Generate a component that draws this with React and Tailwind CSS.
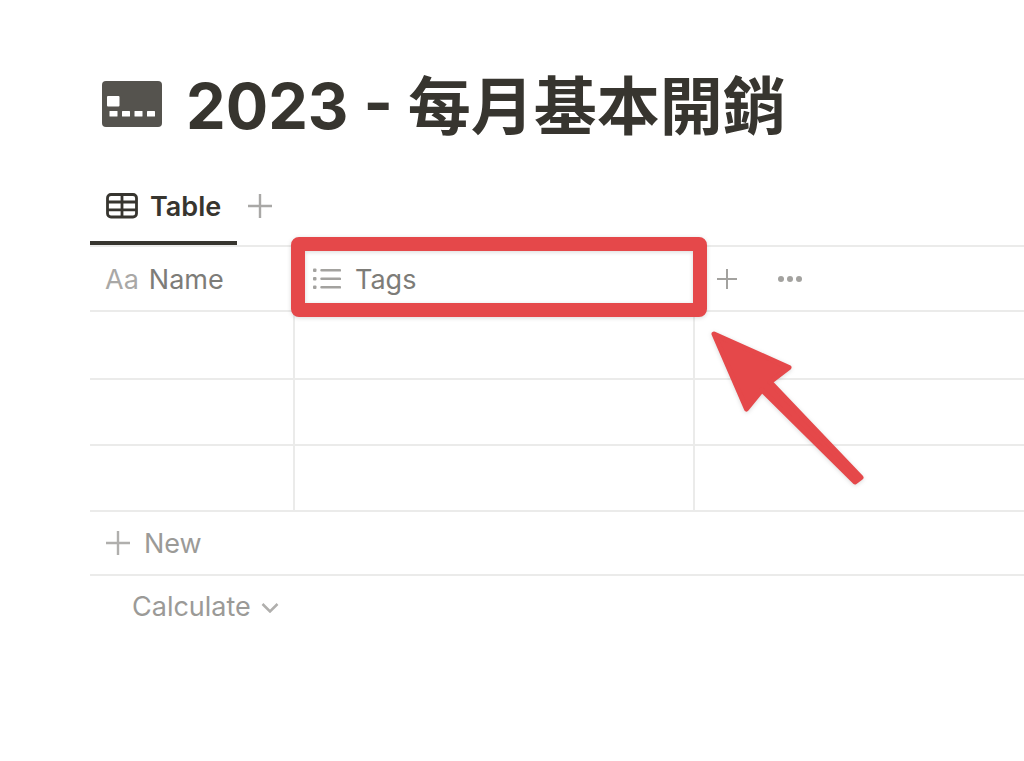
const rows = [1, 2, 3];

const Plus = ({ className }) => (
  <svg viewBox="0 0 24 24" fill="none" stroke="currentColor" strokeWidth="2.4" className={className} aria-hidden="true">
    <path d="M12 0v24M0 12h24" />
  </svg>
);

const CardIcon = () => (
  <svg viewBox="0 0 60 46" className="w-[60px] h-[46px] shrink-0" aria-hidden="true">
    <rect width="60" height="46" rx="4" fill="#55534e" />
    <g fill="#fff">
      <rect x="5" y="15" width="12.5" height="10.5" rx="1" />
      <rect x="7.5" y="30" width="8" height="5.5" rx="0.5" />
      <rect x="20" y="30" width="8" height="5.5" rx="0.5" />
      <rect x="32.5" y="30" width="8" height="5.5" rx="0.5" />
      <rect x="45" y="30" width="8" height="5.5" rx="0.5" />
    </g>
  </svg>
);

const TableIcon = () => (
  <svg viewBox="0 0 32 26" fill="none" stroke="currentColor" strokeWidth="2.8" className="w-8 h-[26px]" aria-hidden="true">
    <rect x="1.5" y="1.5" width="29" height="22.5" rx="3.5" />
    <path d="M1.5 9h29M1.5 16.8h29M16 1.5V24" />
  </svg>
);

const ListIcon = () => (
  <svg viewBox="0 0 28 22" className="w-7 h-[22px] text-[#a3a29f]" aria-hidden="true">
    <g fill="currentColor">
      <rect x="0" y="0.5" width="3.5" height="3.5" rx="1" />
      <rect x="0" y="9" width="3.5" height="3.5" rx="1" />
      <rect x="0" y="17.5" width="3.5" height="3.5" rx="1" />
    </g>
    <path d="M8.5 2.3h18.5M8.5 10.8h18.5M8.5 19.3h18.5" stroke="currentColor" strokeWidth="2.5" strokeLinecap="round" />
  </svg>
);

const Arrow = () => (
  <svg
    viewBox="0 0 156 156"
    className="absolute left-[413px] top-[83px] w-[156px] h-[156px] drop-shadow-sm pointer-events-none"
    fill="#e5484a"
    stroke="#e5484a"
    strokeWidth="5"
    strokeLinejoin="round"
    aria-hidden="true"
  >
    <path d="M6 4L81 37.500L62 52L153 147.5L147 152L54 60L38.5 79Z" />
  </svg>
);

const App = () => {
  return (
    <main className="min-h-screen overflow-hidden bg-white pl-[90px] pt-[60px] font-['Inter','Noto_Sans_CJK_TC',sans-serif] text-[#37352f]">
      <header className="flex items-center gap-6 pl-3 h-[88px]">
        <CardIcon />
        <h1 className="pt-1 text-[63px] leading-[88px] font-bold whitespace-nowrap">2023 - 每月基本開銷</h1>
      </header>

      <nav className="mt-[22px] flex h-[77px] border-b-2 border-[#ebebea]">
        <button type="button" className="flex items-center gap-3 px-4 h-[75px] border-b-4 border-[#37352f] text-[27px] font-semibold">
          <TableIcon />
          <span className="pt-1">Table</span>
        </button>
        <button type="button" aria-label="Add view" className="flex items-center h-[75px] pb-1 pl-[11px] text-[#a9a8a6]">
          <Plus className="w-6 h-6" />
        </button>
      </nav>

      <table className="w-full table-fixed border-separate border-spacing-0 text-[27px] text-[#7d7c78]">
        <colgroup>
          <col className="w-[205px]" />
          <col className="w-[400px]" />
          <col />
        </colgroup>
        <thead>
          <tr className="h-[65px]">
            <th className="border-b-2 border-r-2 border-[#ebebea] p-0 pl-[15px] pt-1 text-left font-normal">
              <div className="flex items-center gap-[10px]">
                <span className="text-[#a9a8a6]">Aa</span>
                Name
              </div>
            </th>
            <th className="relative border-b-2 border-[#ebebea] p-0 pl-[18px] text-left font-normal">
              <div className="flex items-center gap-[14px]">
                <ListIcon />
                <span className="pt-1">Tags</span>
              </div>
              <div className="absolute -left-1 -top-[10px] w-[416px] h-[80px] rounded-lg border-[14px] border-[#e5484a] drop-shadow-sm pointer-events-none" />
              <Arrow />
            </th>
            <th className="border-b-2 border-[#ebebea] p-0 pl-[22px] text-left font-normal">
              <div className="flex items-center gap-10 text-[#a3a29f]">
                <button type="button" aria-label="Add property">
                  <Plus className="w-5 h-5" />
                </button>
                <button type="button" aria-label="More options">
                  <svg viewBox="0 0 26 8" fill="currentColor" className="w-[26px] h-2">
                    <circle cx="4" cy="4" r="3" />
                    <circle cx="13" cy="4" r="3" />
                    <circle cx="22" cy="4" r="3" />
                  </svg>
                </button>
              </div>
            </th>
          </tr>
        </thead>
        <tbody>
          {rows.map((row) => (
            <tr key={row} className="h-[66px] first:h-[68px]">
              <td className="border-b-2 border-r-2 border-[#ebebea]"></td>
              <td className="border-b-2 border-r-2 border-[#ebebea]"></td>
              <td className="border-b-2 border-[#ebebea]"></td>
            </tr>
          ))}
        </tbody>
      </table>

      <button type="button" className="flex w-full h-16 items-center gap-[14px] border-b-2 border-[#ebebea] pl-4 text-[27px] text-[#9b9a97]">
        <Plus className="w-6 h-6 text-[#b0afad]" />
        <span className="pt-0.5">New</span>
      </button>
      <button type="button" className="flex h-[62px] items-center gap-[10px] pl-[42px] text-[27px] text-[#9b9a97]">
        Calculate
        <svg viewBox="0 0 18 12" fill="none" stroke="currentColor" strokeWidth="2.5" className="w-[18px] h-3 text-[#b0afad]" aria-hidden="true">
          <path d="M1.5 3L9 10.5L16.5 3" />
        </svg>
      </button>
    </main>
  );
};

export default App;
